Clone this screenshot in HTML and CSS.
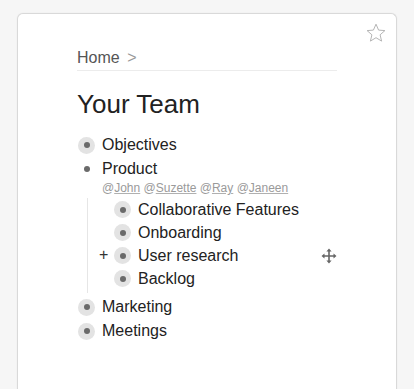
FILE: index.html
```html
<!DOCTYPE html>
<html lang="en">
<head>
  <meta charset="UTF-8">
  <meta name="viewport" content="width=device-width, initial-scale=1.0">
  <link rel="stylesheet" href="styles.css">
</head>
<body>

<div class="card">
  <svg class="star" width="20" height="20" viewBox="0 0 20 20">
    <polygon points="10,1.2 12.6,7.1 18.9,7.6 14.1,11.8 15.6,18.1 10,14.7 4.4,18.1 5.9,11.8 1.1,7.6 7.4,7.1" fill="none" stroke="#b5b5b5" stroke-width="1" stroke-linejoin="round"/>
  </svg>

  <div class="page">
    <div class="crumbs">Home <span class="sep">&gt;</span></div>
    <h1 class="title">Your Team</h1>

    <div class="tree">
      <div class="row"><span class="bullet"></span>Objectives</div>

      <div class="row"><span class="bullet open"></span>Product</div>
      <div class="mentions">@<u>John</u> @<u>Suzette</u> @<u>Ray</u> @<u>Janeen</u></div>
      <div class="children">
        <div class="row child"><span class="bullet"></span>Collaborative Features</div>
        <div class="row child"><span class="bullet"></span>Onboarding</div>
        <div class="row child hover">
          <span class="add">+</span>
          <span class="bullet"></span>User research
          <svg class="move" width="16" height="16" viewBox="0 0 16 16">
            <path d="M8 3v10M3 8h10" stroke="#666" stroke-width="1.6"/>
            <path d="M8 0.5l2.6 3H5.4z M8 15.5l2.6-3H5.4z M0.5 8l3-2.6v5.2z M15.5 8l-3-2.6v5.2z" fill="#666"/>
          </svg>
        </div>
        <div class="row child"><span class="bullet"></span>Backlog</div>
      </div>

      <div class="row"><span class="bullet"></span>Marketing</div>
      <div class="row"><span class="bullet"></span>Meetings</div>
    </div>
  </div>
</div>

</body>
</html>
```

FILE: styles.css
```css
html, body {
  margin: 0;
  height: 100%;
  overflow: hidden;
}

body {
  font-family: "Liberation Sans", Arial, sans-serif;
  background-color: #f6f6f6;
  padding: 13px 17px 0 17px;
  box-sizing: border-box;
  color: #222;
}

.card {
  position: relative;
  height: 390px;
  background-color: #fff;
  border: 1px solid #d9d9d9;
  border-bottom: none;
  border-radius: 6px 6px 0 0;
  box-shadow: 0 0 2px rgba(0, 0, 0, 0.06);
}

.star {
  position: absolute;
  top: 9px;
  right: 10px;
}

.page {
  width: 260px;
  padding: 34px 0 0 59px;
}

.crumbs {
  font-size: 16px;
  line-height: 20px;
  color: #555;
  padding-bottom: 2px;
  border-bottom: 1px solid #ececec;
}

.crumbs .sep {
  color: #999;
  margin-left: 3px;
}

.title {
  font-size: 26px;
  font-weight: normal;
  line-height: 30px;
  margin: 18px 0 14px 0;
  color: #222;
}

.tree {
  font-size: 16px;
}

.row {
  position: relative;
  display: flex;
  align-items: center;
  height: 24px;
}

.bullet {
  width: 17px;
  height: 17px;
  border-radius: 50%;
  background-color: #e3e3e3;
  margin: 0 7px 0 1px;
  display: flex;
  align-items: center;
  justify-content: center;
  flex-shrink: 0;
}

.bullet::after {
  content: "";
  width: 6px;
  height: 6px;
  border-radius: 50%;
  background-color: #6a6a6a;
}

.bullet.open {
  background-color: transparent;
}

.mentions {
  font-size: 12px;
  line-height: 14px;
  color: #9a9a9a;
  padding: 0 0 3px 25px;
}

.mentions u {
  text-decoration-color: #b0b0b0;
}

.children {
  margin: 0 0 2px 10px;
  padding-bottom: 3px;
  border-left: 1px solid #e6e6e6;
}

.row.child {
  height: 23px;
  padding-left: 25px;
}

.add {
  position: absolute;
  left: 11px;
  top: 0;
  line-height: 22px;
  font-size: 16px;
  color: #333;
}

.move {
  margin-left: auto;
}
```
